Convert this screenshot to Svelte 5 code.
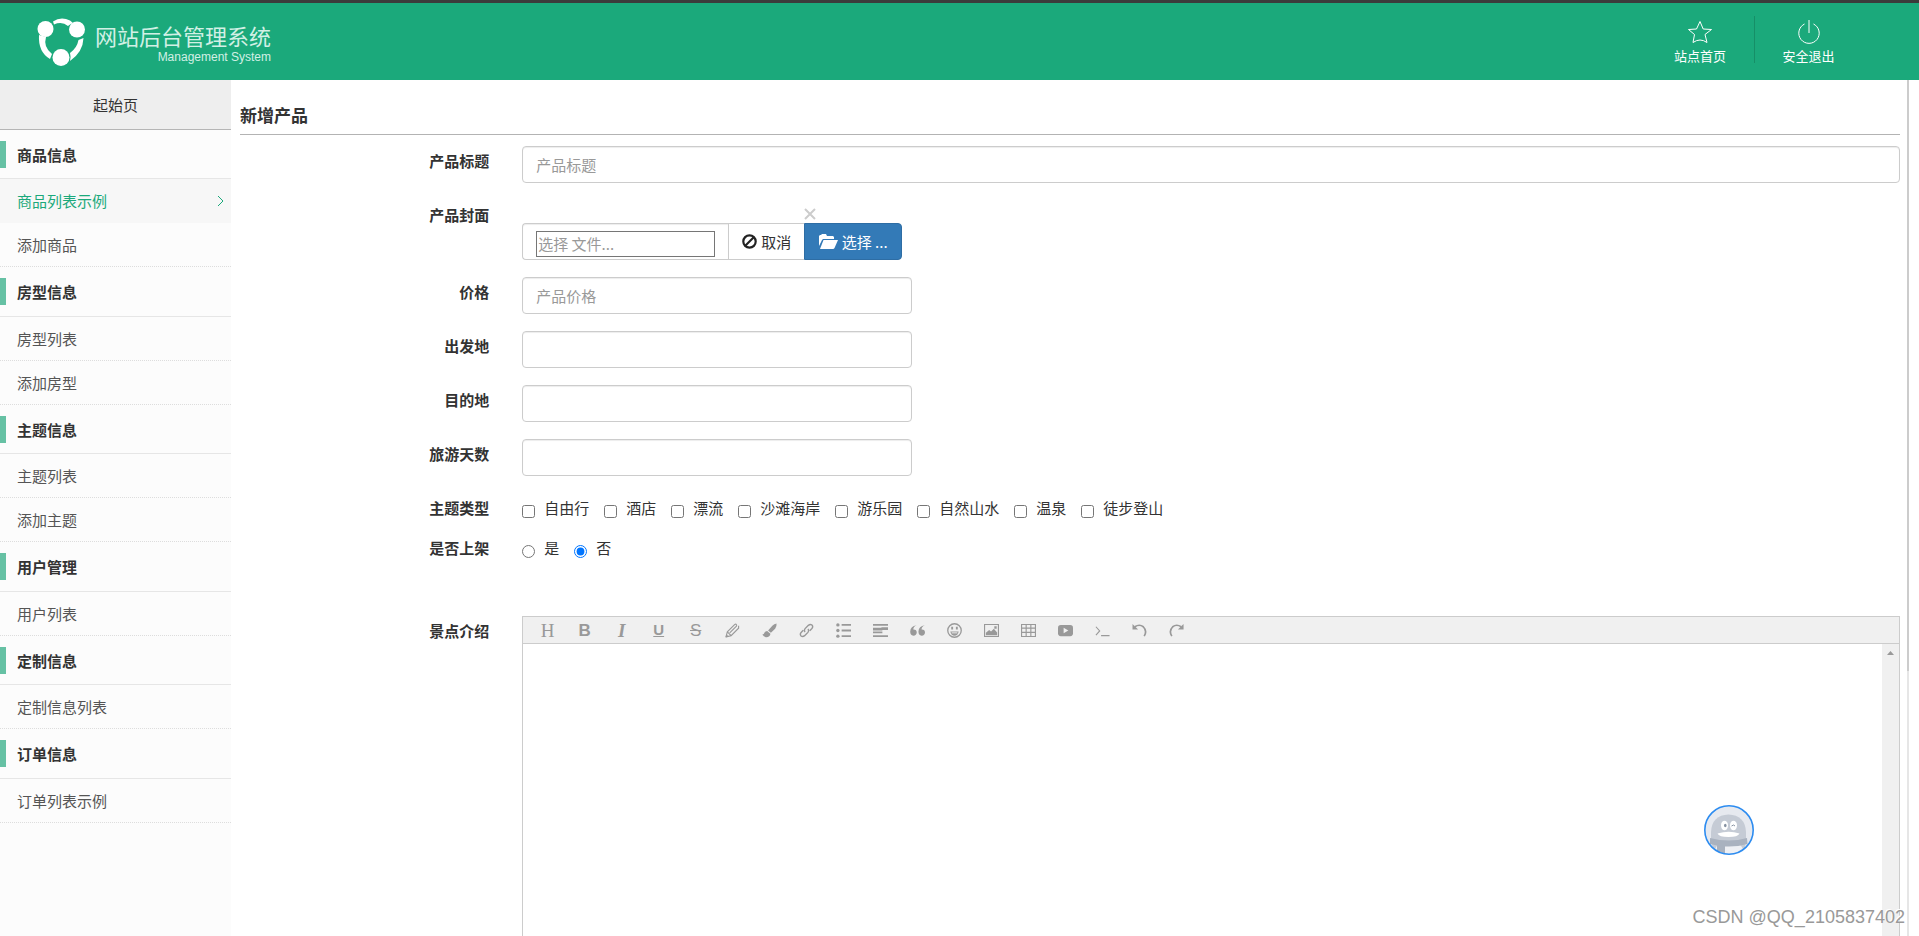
<script>
	const menu = [
		{ title: '商品信息', items: ['商品列表示例', '添加商品'] },
		{ title: '房型信息', items: ['房型列表', '添加房型'] },
		{ title: '主题信息', items: ['主题列表', '添加主题'] },
		{ title: '用户管理', items: ['用户列表'] },
		{ title: '定制信息', items: ['定制信息列表'] },
		{ title: '订单信息', items: ['订单列表示例'] }
	];
	const themes = ['自由行', '酒店', '漂流', '沙滩海岸', '游乐园', '自然山水', '温泉', '徒步登山'];
	const tools = [
		'head', 'bold', 'italic', 'underline', 'strike', 'pencil', 'brush', 'link', 'list',
		'justify', 'quote', 'emoticon', 'image', 'table', 'video', 'code', 'undo', 'redo'
	];
	const letters = { head: 'H', bold: 'B', italic: 'I', underline: 'U', strike: 'S' };

	let active = $state('商品列表示例');
	let online = $state('否');
	let title = $state('');
	let price = $state('');
	let from = $state('');
	let to = $state('');
	let days = $state('');
</script>

<div class="page">
	<header>
		<a class="logo" href="#home">
			<svg width="50" height="50" viewBox="36 18 50 50" aria-hidden="true">
				<g fill="#fff">
					<circle cx="45.5" cy="30" r="8" />
					<circle cx="77" cy="30.5" r="8" />
					<circle cx="61" cy="58.5" r="8.5" />
					<path d="M53 22.500Q61 17 70 21.500L73 24Q69 26 68 27Q62 22 54 25.500Z" />
					<path d="M39 36Q38 53 50 60L52 55Q43 48 46 38Z" />
					<path d="M83.500 39Q83 53 70 62Q71 57 70 54Q77 49 78.500 41Z" />
				</g>
			</svg>
			<span class="names">
				<span class="name">网站后台管理系统</span>
				<span class="sub">Management System</span>
			</span>
		</a>
		<nav>
			<a href="#site">
				<svg width="26" height="26" viewBox="0 0 26 26" fill="none" stroke="#fff" aria-hidden="true">
					<path d="M13 2.500 16.200 10 24.500 10.500 18 15.500 20 23.500Q13 18.500 6 23.500L7.500 15.500 1.500 10.500 9.500 10Z" />
				</svg>
				站点首页
			</a>
			<a href="#logout">
				<svg width="26" height="26" viewBox="0 0 26 26" fill="none" stroke="#fff" aria-hidden="true">
					<path d="M8.500 5A10.200 10.200 0 1 0 17.500 5M13 1V14" />
				</svg>
				安全退出
			</a>
		</nav>
	</header>

	<div class="body">
		<aside>
			<a class="start" href="#start">起始页</a>
			<div class="groups">
				{#each menu as group}
					<section>
						<h3>{group.title}</h3>
						{#each group.items as item}
							<a class="item" class:active={item === active} href="#{item}" onclick={() => (active = item)}>
								{item}
								{#if item === active}
									<svg width="7" height="12" viewBox="0 0 7 12" fill="none" stroke="currentColor" aria-hidden="true">
										<path d="M1 1 6 6 1 11" />
									</svg>
								{/if}
							</a>
						{/each}
					</section>
				{/each}
			</div>
		</aside>

		<main>
			<form>
				<h1>新增产品</h1>

				<div class="row">
					<label class="label" for="title">产品标题</label>
					<input class="control full" id="title" type="text" placeholder="产品标题" bind:value={title} />
				</div>
				<div class="row">
					<label class="label" for="cover">产品封面</label>
					<div class="file">
						<button class="close" type="button" aria-label="关闭">
							<svg width="12" height="12" viewBox="0 0 12 12" stroke="#ccc" stroke-width="2" aria-hidden="true">
								<path d="M1 1 11 11M11 1 1 11" />
							</svg>
						</button>
						<div class="caption">
							<input id="cover" type="text" placeholder="选择 文件..." readonly />
						</div>
						<button class="cancel" type="button">
							<svg width="15" height="15" viewBox="0 0 15 15" fill="none" stroke="#222" stroke-width="2.200" aria-hidden="true">
								<circle cx="7.500" cy="7.500" r="6.200" />
								<path d="M3 12 12 3" />
							</svg>
							取消
						</button>
						<button class="browse" type="button">
							<svg width="19" height="15" viewBox="0 0 19 15" fill="#fff" aria-hidden="true">
								<path d="M0 12V2L1 1H2L3 0H7L8 2H14L15 3V5H4L3 6Z" />
								<path d="M4.500 6H19L15.500 14Q15 15 14 15H1Z" />
							</svg>
							选择 ...
						</button>
					</div>
				</div>
				<div class="row">
					<label class="label" for="price">价格</label>
					<input class="control" id="price" type="text" placeholder="产品价格" bind:value={price} />
				</div>
				<div class="row">
					<label class="label" for="from">出发地</label>
					<input class="control" id="from" type="text" bind:value={from} />
				</div>
				<div class="row">
					<label class="label" for="to">目的地</label>
					<input class="control" id="to" type="text" bind:value={to} />
				</div>
				<div class="row">
					<label class="label" for="days">旅游天数</label>
					<input class="control" id="days" type="text" bind:value={days} />
				</div>
				<div class="row">
					<span class="label" id="theme-label">主题类型</span>
					<div class="choices" role="group" aria-labelledby="theme-label">
						{#each themes as theme}
							<label><input type="checkbox" name="theme" value={theme} />{theme}</label>
						{/each}
					</div>
				</div>
				<div class="row last-choice">
					<span class="label" id="online-label">是否上架</span>
					<div class="choices" role="radiogroup" aria-labelledby="online-label">
						{#each ['是', '否'] as value}
							<label><input type="radio" name="online" {value} bind:group={online} />{value}</label>
						{/each}
					</div>
				</div>
				<div class="row">
					<label class="label" for="intro">景点介绍</label>
					<div class="editor">
						<div class="toolbar">
							{#each tools as tool}
								<button type="button" aria-label={tool}>
									{#if letters[tool]}
										<span class={tool}>{letters[tool]}</span>
									{:else}
										<svg width="15" height="15" viewBox="0 0 16 16" fill="none" stroke="currentColor" stroke-width="1.500" aria-hidden="true">
											{#if tool === 'pencil'}
												<path stroke-width="1.200" d="M1 15 2.500 9.500 10.500 1.500M1 15 6.500 13.500 14.500 5.500V3M2.500 9.500 6.500 13.500M5 10.500 12.500 3M10.500 1.500Q12 .5 12.500 3" />
												<path fill="currentColor" stroke="none" d="M.5 15.500 1.500 12 4 14.500Z" />
											{:else if tool === 'brush'}
												<path fill="currentColor" stroke="none" d="M15.500.5Q16 3 14 6L9.500 10.500 6.500 8 11 3Q13 1 15.500.5ZM5.500 8.500 9 11.500Q8.500 15.500 4 15.200Q1.500 15 .5 12Q2 12.500 2.500 10.500Q3.500 8.500 5.500 8.500Z" />
											{:else if tool === 'link'}
												<path d="M6.500 9.500Q5 8 6.500 6L10 2.500Q12 .8 13.800 2.200Q15.500 4 13.500 6.200L11.500 8.200M9.500 6.500Q11 8 9.500 10L6 13.500Q4 15.200 2.200 13.800Q.5 12 2.500 9.800L4.500 7.800" />
											{:else if tool === 'list'}
												<path stroke-width="2" d="M6 2H16M6 8H16M6 14H16" />
												<g fill="currentColor" stroke="none">
													<circle cx="2" cy="2" r="1.800" /><circle cx="2" cy="8" r="1.800" /><circle cx="2" cy="14" r="1.800" />
												</g>
											{:else if tool === 'justify'}
												<path stroke-width="2" d="M0 2H16M0 10H10M0 14H16" />
												<path stroke-width="3" d="M0 6.500H10M9 6H16" />
											{:else if tool === 'quote'}
												<path fill="currentColor" stroke="none" d="M7 2.500Q3.500 4 3.500 7Q7.200 6.800 7.200 10.200Q7 13.500 3.600 13.500Q.2 13.200.2 9Q.5 3.500 7 2.500ZM15.800 2.500Q12.300 4 12.300 7Q16 6.800 16 10.200Q15.800 13.500 12.400 13.500Q9 13.200 9 9Q9.300 3.500 15.800 2.500Z" />
											{:else if tool === 'emoticon'}
												<circle cx="8" cy="8" r="7.200" stroke-width="1.400" />
												<path fill="currentColor" stroke="none" d="M3.500 9H12.500Q11.500 13.500 8 13.500Q4.500 13.500 3.500 9ZM4.500 4H6.500V7H4.500ZM9.500 4H11.500V7H9.500Z" />
												<path stroke="#f0f0f0" stroke-width="1" d="M5 10.500H11" />
											{:else if tool === 'image'}
												<path stroke-width="1.200" d="M.6 1.600H15.400V14.400H.6Z" />
												<path fill="currentColor" stroke="none" d="M2 13V10.500L5.500 7.500 7.500 9 10.500 6 14 10V13ZM11 3.500H13.500V6H11Z" />
											{:else if tool === 'table'}
												<path stroke-width="1.200" d="M.6 1.600H15.400V14.400H.6ZM.6 5.500H15.400M.6 10H15.400M5.500 1.600V14.400M10.500 1.600V14.400" />
											{:else if tool === 'video'}
												<rect x="0" y="2" width="16" height="12" rx="3" fill="currentColor" stroke="none" />
												<path fill="#f0f0f0" stroke="none" d="M6 5 11 8 6 11Z" />
											{:else if tool === 'code'}
												<path stroke-width="1.200" d="M1 4 5 8.500 1 13M6.500 13.500H15.500" />
											{:else if tool === 'undo'}
												<path stroke-width="1.800" d="M3 4Q8 .8 12 4Q16.500 8.500 13 14" />
												<path fill="currentColor" stroke="none" d="M.5 1V7H6.500Z" />
											{:else}
												<path stroke-width="1.800" d="M13 4Q8 .8 4 4Q-.5 8.500 3 14" />
												<path fill="currentColor" stroke="none" d="M15.500 1V7H9.500Z" />
											{/if}
										</svg>
									{/if}
								</button>
							{/each}
						</div>
						<div class="writing">
							<textarea id="intro"></textarea>
							<div class="strip">
								<svg width="7" height="4" viewBox="0 0 7 4" fill="#999" aria-hidden="true"><path d="M0 4 3.500 0 7 4Z" /></svg>
							</div>
						</div>
					</div>
				</div>
			</form>
			<div class="scroll"><div class="thumb"></div></div>
		</main>
	</div>

	<button class="helper" type="button" aria-label="QQ">
		<svg width="50" height="50" viewBox="0 0 50 50" aria-hidden="true">
			<defs><clipPath id="round"><circle cx="25" cy="25" r="24" /></clipPath></defs>
			<g clip-path="url(#round)">
				<rect width="50" height="50" fill="#e6e9ef" />
				<path fill="#c5cbd5" d="M7 34V27Q8 10 24.500 9.500Q41 10 42 27V34L40 50H10Z" />
				<ellipse cx="25" cy="46" rx="14" ry="10" fill="#eef0f4" />
				<path fill="#a9b2bf" d="M6 33Q25 38 43 33L43.500 39Q25 44 6 39ZM13 40 21 41V50H13Z" />
				<ellipse cx="20.500" cy="20.500" rx="3.500" ry="4.800" fill="#fff" />
				<ellipse cx="29.500" cy="20.500" rx="3.500" ry="4.800" fill="#fff" />
				<ellipse cx="21.300" cy="20.500" rx="1.300" ry="1.800" fill="#8792a2" />
				<path fill="none" stroke="#8792a2" d="M27.500 21 29.500 20 31 21" />
				<path fill="#fff" d="M13.500 28.500Q25 25 35.500 28.500Q34 32 24.500 32Q15 32 13.500 28.500Z" />
			</g>
			<circle cx="25" cy="25" r="24.200" fill="none" stroke="#2d8cf0" stroke-width="1.600" />
		</svg>
	</button>
	<div class="watermark">CSDN @QQ_2105837402</div>
</div>

<style>
	:global(body) {
		margin: 0;
		color: #333;
		font: 15px/15px "Noto Sans CJK SC", sans-serif;
	}
	* {
		box-sizing: border-box;
	}
	a {
		color: inherit;
		text-decoration: none;
	}
	button,
	input,
	textarea {
		font: inherit;
		color: inherit;
	}
	button {
		padding: 0;
		border: 0;
		background: none;
		cursor: pointer;
	}
	.page {
		display: flex;
		flex-direction: column;
		height: 100vh;
		overflow: hidden;
	}

	header {
		display: flex;
		justify-content: space-between;
		flex: none;
		height: 80px;
		padding: 0 57px 0 36px;
		border-top: 3px solid #3b3b3b;
		background: #1ba97b;
		color: #fff;
	}
	.logo {
		display: flex;
		align-items: center;
		gap: 9px;
		padding-top: 4px;
	}
	.logo svg {
		margin-bottom: 4px;
	}
	.names {
		display: flex;
		flex-direction: column;
		align-items: flex-end;
		gap: 2px;
		padding-bottom: 2px;
		color: #d2f0e5;
	}
	.name {
		font-size: 22px;
		line-height: 26px;
	}
	.sub {
		font: 12px/14px "Liberation Sans", sans-serif;
	}
	nav {
		display: flex;
		padding: 13px 0 17px;
	}
	nav a {
		display: flex;
		flex-direction: column;
		align-items: center;
		gap: 3px;
		width: 108px;
		padding-top: 3px;
		font-size: 13px;
	}
	nav a + a {
		border-left: 1px solid #168f67;
	}

	.body {
		display: flex;
		flex: 1;
		min-height: 0;
	}
	aside {
		flex: none;
		width: 231px;
		background: #fcfcfc;
	}
	.start {
		display: block;
		border-bottom: 1px solid #b5b5b5;
		background: #eee;
		line-height: 49px;
		text-align: center;
	}
	h3 {
		display: flex;
		align-items: center;
		gap: 11px;
		height: 49px;
		margin: 0;
		border-bottom: 1px solid #e6e6e6;
		font-size: 15px;
	}
	section:nth-child(even) h3 {
		height: 50px;
	}
	h3::before {
		width: 6px;
		height: 27px;
		background: #66c1a4;
		content: '';
	}
	.item {
		display: flex;
		justify-content: space-between;
		align-items: center;
		height: 44px;
		padding: 0 7px 0 17px;
		border-bottom: 1px dotted #ddd;
		color: #555;
	}
	.item.active {
		border-color: #f7f7f7;
		background: #f7f7f7;
		color: #1ba97b;
	}

	main {
		display: flex;
		flex: 1;
		min-width: 0;
		padding: 0 10px 0 9px;
		overflow: hidden;
	}
	form {
		flex: 1;
		min-width: 0;
		padding-right: 7px;
	}
	h1 {
		margin: 0 0 11px;
		padding: 20px 0 4px;
		border-bottom: 1px solid #b3b3b3;
		font-size: 17px;
		line-height: 30px;
	}
	.row {
		display: grid;
		grid-template-columns: 17% 1fr;
		align-items: start;
		margin-bottom: 17px;
	}
	.last-choice {
		margin-bottom: 60px;
	}
	.label {
		padding: 7px 33px 1px 0;
		font-weight: 700;
		text-align: right;
	}
	.control {
		width: 100%;
		max-width: 390px;
		height: 37px;
		padding: 0 13px;
		border: 1px solid #ccc;
		border-radius: 4px;
		background: #fff;
		box-shadow: inset 0 1px 1px rgba(0, 0, 0, 0.075);
	}
	.full {
		max-width: none;
	}
	input::placeholder {
		color: #999;
		opacity: 1;
	}
	.file {
		display: grid;
		grid-template-columns: 206px 76px 98px;
		grid-template-rows: 23px 37px;
	}
	.close {
		display: flex;
		grid-column: 3;
		justify-self: start;
		padding-top: 8px;
	}
	.caption {
		grid-column: 1;
		padding: 7px 13px 0;
		border: 1px solid #ccc;
		border-right: 0;
		border-radius: 4px 0 0 4px;
		box-shadow: inset 0 1px 1px rgba(0, 0, 0, 0.075);
	}
	.caption input {
		display: block;
		width: 100%;
		height: 26px;
		padding: 0 1px 2px;
		border: 1px solid #767676;
		border-radius: 0;
	}
	.cancel,
	.browse {
		display: flex;
		justify-content: center;
		align-items: center;
		gap: 4px;
		border: 1px solid #ccc;
	}
	.cancel {
		border-right: 0;
	}
	.browse {
		border-color: #2e6da4;
		border-radius: 0 4px 4px 0;
		background: #337ab7;
		color: #fff;
	}
	.choices {
		display: flex;
		flex-wrap: wrap;
		gap: 15px;
		padding: 7px 0 1px;
	}
	.choices label {
		display: flex;
		gap: 9px;
		height: 15px;
	}
	.choices input {
		width: 13px;
		height: 13px;
		margin: 5px 0 0;
	}

	.editor {
		border: 1px solid #ccc;
	}
	.toolbar {
		display: flex;
		height: 27px;
		padding-left: 6px;
		border-bottom: 1px solid #ccc;
		background: #f0f0f0;
	}
	.toolbar button {
		display: flex;
		justify-content: center;
		align-items: center;
		width: 37px;
		color: #999;
	}
	.toolbar span {
		font-family: "Liberation Sans", sans-serif;
		font-weight: 700;
	}
	.toolbar .head {
		font: 19px/19px "Liberation Serif", serif;
	}
	.toolbar .bold {
		font-size: 17px;
	}
	.toolbar .italic {
		font: italic 700 19px/19px "Liberation Serif", serif;
	}
	.toolbar .underline {
		padding-bottom: 2px;
		text-decoration: underline;
	}
	.toolbar .strike {
		font-weight: 400;
		font-size: 17px;
		text-decoration: line-through;
	}
	.writing {
		display: flex;
		height: 400px;
	}
	textarea {
		flex: 1;
		padding: 10px;
		border: 0;
		outline: 0;
		resize: none;
	}
	.strip {
		display: flex;
		justify-content: center;
		width: 17px;
		padding-top: 7px;
		background: #f0f0f0;
	}
	.scroll {
		width: 2px;
		background: #e6e6e6;
	}
	.thumb {
		height: 69%;
		background: #ccc;
	}

	.helper {
		position: absolute;
		right: 165px;
		bottom: 81px;
		display: flex;
	}
	.watermark {
		position: absolute;
		right: 14px;
		bottom: 8px;
		color: #999;
		font: 18px/22px "Liberation Sans", sans-serif;
		text-shadow: -1px -1px 0 #fff;
	}
</style>
